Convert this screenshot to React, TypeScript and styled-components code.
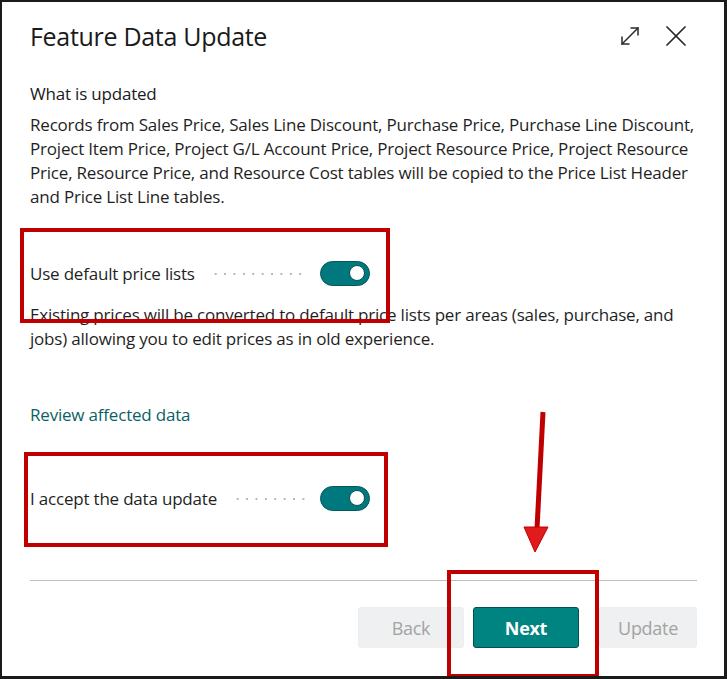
import React from 'react';
import styled, { createGlobalStyle } from 'styled-components';

const GlobalStyle = createGlobalStyle`
  body {
    margin: 0;
    background: #ffffff;
    font-family: "Open Sans", "Noto Sans", Arial, sans-serif;
    color: #212121;
  }
`;

const Frame = styled.div`
  position: relative;
  width: 727px;
  height: 679px;
  box-sizing: border-box;
  border: 2px solid #1a1a1a;
  border-right-width: 3px;
  border-bottom-width: 3px;
  background: #ffffff;
  padding: 0 27px 0 28px;
  display: flex;
  flex-direction: column;
  overflow: hidden;
`;

const Header = styled.div`
  display: flex;
  align-items: center;
  justify-content: space-between;
  height: 36px;
  margin-top: 16px;
`;

const Title = styled.h1`
  margin: 0;
  font-size: 25px;
  font-weight: 400;
  letter-spacing: -0.3px;
  color: #1a1a1a;
`;

const HeaderIcons = styled.div`
  display: flex;
  align-items: center;
  gap: 24px;
  padding-right: 10px;
`;

const IconButton = styled.button`
  border: none;
  background: none;
  padding: 0;
  width: 22px;
  height: 22px;
  display: flex;
  align-items: center;
  justify-content: center;
  color: #262626;
`;

const SectionTitle = styled.div`
  margin-top: 28px;
  font-size: 17px;
  line-height: 24px;
  letter-spacing: -0.2px;
  color: #1a1a1a;
`;

const Paragraph = styled.p<{ $top?: number }>`
  margin: ${(p) => p.$top ?? 7}px 0 0 0;
  font-size: 17px;
  line-height: 24px;
  color: #1f1f1f;
  letter-spacing: -0.2px;
  white-space: nowrap;
`;

const ToggleRow = styled.div<{ $top: number }>`
  display: flex;
  align-items: center;
  margin-top: ${(p) => p.$top}px;
  height: 26px;
  width: 340px;
`;

const ToggleLabel = styled.span`
  font-size: 17px;
  color: #1f1f1f;
  white-space: nowrap;
  letter-spacing: -0.2px;
`;

const Leader = styled.span`
  flex: 1;
  height: 2px;
  margin: 2px 12px 0 16px;
  background-image: radial-gradient(circle, #b5b5b5 0.9px, transparent 1.1px);
  background-size: 9.4px 2px;
  background-repeat: repeat-x;
`;

const Switch = styled.span<{ $on: boolean }>`
  position: relative;
  flex: none;
  width: 50px;
  height: 25px;
  box-sizing: border-box;
  border-radius: 13px;
  background: ${(p) => (p.$on ? '#00797e' : '#ffffff')};
  border: 1.5px solid ${(p) => (p.$on ? '#04585c' : '#605e5c')};
  &::after {
    content: '';
    position: absolute;
    top: 3px;
    ${(p) => (p.$on ? 'right: 4px;' : 'left: 4px;')}
    width: 16px;
    height: 16px;
    box-sizing: border-box;
    border-radius: 50%;
    background: #ffffff;
    border: 1px solid #0b4d50;
  }
`;

const Link = styled.a`
  margin-top: 52px;
  font-size: 17px;
  line-height: 24px;
  color: #0c5f66;
  text-decoration: none;
  letter-spacing: -0.2px;
  align-self: flex-start;
`;

const Divider = styled.hr`
  margin: 69px 0 0 0;
  border: none;
  border-top: 1px solid #bdbdbd;
`;

const Footer = styled.div`
  display: flex;
  justify-content: flex-end;
  margin-top: 26px;
`;

const Button = styled.button<{ $primary?: boolean; $width: number; $gap: number }>`
  width: ${(p) => p.$width}px;
  height: 41px;
  margin-left: ${(p) => p.$gap}px;
  border-radius: 3px;
  font-family: "Open Sans", "Noto Sans", Arial, sans-serif;
  font-size: 18px;
  font-weight: ${(p) => (p.$primary ? 700 : 400)};
  letter-spacing: -0.3px;
  color: ${(p) => (p.$primary ? '#ffffff' : '#a3a3a3')};
  background: ${(p) => (p.$primary ? '#008481' : '#eff0f1')};
  border: 1px solid ${(p) => (p.$primary ? '#05504e' : '#eeeeee')};
`;

const Highlight = styled.div<{ $x: number; $y: number; $w: number; $h: number }>`
  position: absolute;
  left: ${(p) => p.$x}px;
  top: ${(p) => p.$y}px;
  width: ${(p) => p.$w}px;
  height: ${(p) => p.$h}px;
  box-sizing: border-box;
  border: 4px solid #c00000;
  pointer-events: none;
`;

const ArrowOverlay = styled.svg`
  position: absolute;
  left: 505px;
  top: 405px;
  width: 60px;
  height: 150px;
  pointer-events: none;
`;

const ExpandIcon = () => (
  <svg width="22" height="22" viewBox="0 0 22 22" fill="none" stroke="#2b2b2b" strokeWidth="1.5" strokeLinecap="round">
    <path d="M3 19 L19 3" />
    <path d="M12 3 H19 V10" />
    <path d="M3 12 V19 H10" />
  </svg>
);

const CloseIcon = () => (
  <svg width="22" height="22" viewBox="0 0 22 22" fill="none" stroke="#262626" strokeWidth="1.7" strokeLinecap="round">
    <path d="M2 2 L20 20" />
    <path d="M20 2 L2 20" />
  </svg>
);

export default function App() {
  return (
    <>
      <GlobalStyle />
      <Frame>
        <Header>
          <Title>Feature Data Update</Title>
          <HeaderIcons>
            <IconButton aria-label="Expand">
              <ExpandIcon />
            </IconButton>
            <IconButton aria-label="Close">
              <CloseIcon />
            </IconButton>
          </HeaderIcons>
        </Header>

        <SectionTitle>What is updated</SectionTitle>
        <Paragraph $top={7}>
          Records from Sales Price, Sales Line Discount, Purchase Price, Purchase Line Discount,
          <br />
          Project Item Price, Project G/L Account Price, Project Resource Price, Project Resource
          <br />
          Price, Resource Price, and Resource Cost tables will be copied to the Price List Header
          <br />
          and Price List Line tables.
        </Paragraph>

        <ToggleRow $top={51}>
          <ToggleLabel>Use default price lists</ToggleLabel>
          <Leader />
          <Switch $on />
        </ToggleRow>

        <Paragraph $top={17}>
          Existing prices will be converted to default price lists per areas (sales, purchase, and
          <br />
          jobs) allowing you to edit prices as in old experience.
        </Paragraph>

        <Link href="#">Review affected data</Link>

        <ToggleRow $top={58}>
          <ToggleLabel>I accept the data update</ToggleLabel>
          <Leader />
          <Switch $on />
        </ToggleRow>

        <Divider />

        <Footer>
          <Button $width={106} $gap={0}>Back</Button>
          <Button $width={106} $gap={9} $primary>Next</Button>
          <Button $width={98} $gap={20}>Update</Button>
        </Footer>

        <Highlight $x={18} $y={226} $w={370} $h={95} />
        <Highlight $x={22} $y={450} $w={364} $h={95} />
        <Highlight $x={445} $y={568} $w={152} $h={108} />

        <ArrowOverlay viewBox="0 0 60 150">
          <path d="M36 5 L30 122" stroke="#c00000" strokeWidth="5" strokeLinecap="butt" />
          <path d="M17 120 L41 120 L28 145 Z" fill="#e11b1b" stroke="#c00000" strokeWidth="1" />
        </ArrowOverlay>
      </Frame>
    </>
  );
}
